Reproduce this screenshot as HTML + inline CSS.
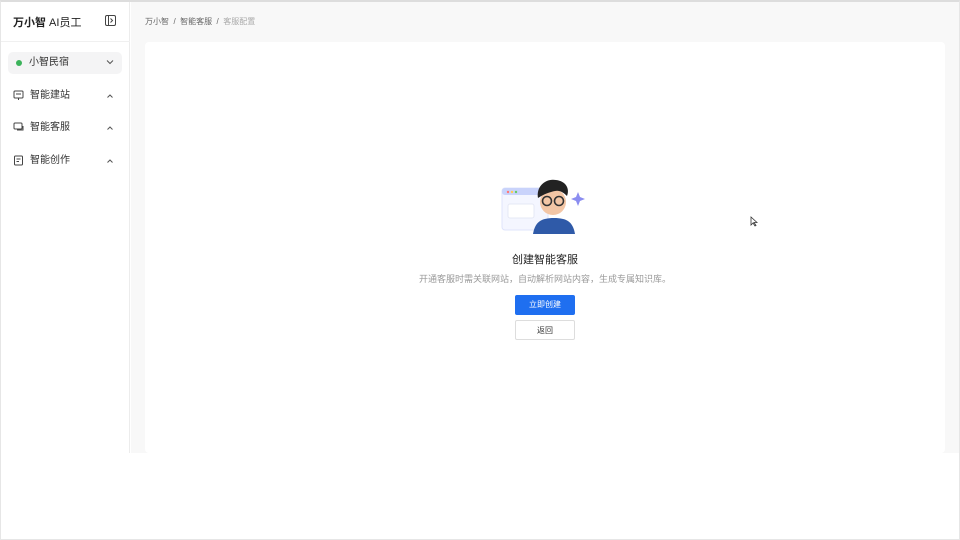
<!DOCTYPE html>
<html><head><meta charset="utf-8"><style>
*{margin:0;padding:0;box-sizing:border-box}
body{width:960px;height:540px;background:#fff;font-family:"Liberation Sans","Noto Sans CJK SC",sans-serif;position:relative;overflow:hidden;color:#333}
.frame{position:absolute;inset:0;border:1px solid #e6e6e6;border-top:2px solid #ddd;pointer-events:none}
.side{position:absolute;left:0;top:0;width:130px;height:453px;border-right:1px solid #ececec;background:#fff}
.logo{position:absolute;left:13px;top:14px;font-size:11px;color:#222}
.logo b{font-weight:700}
.hdrline{position:absolute;left:0;top:41px;width:130px;border-top:1px solid #f0f0f0}
.sel{position:absolute;left:8px;top:52px;width:114px;height:22px;background:#f4f4f5;border-radius:5px;font-size:10px;line-height:22px;padding-left:21px;color:#333}
.sel:before{content:"";position:absolute;left:8px;top:8px;width:6px;height:6px;border-radius:50%;background:#3cb35b}
.item{position:absolute;left:14px;font-size:10px;color:#333;padding-left:16px;height:14px;line-height:14px}
.chev{position:absolute;left:106px}
.main{position:absolute;left:131px;top:0;width:829px;height:453px;background:#f8f8f8}
.bc{position:absolute;left:145px;top:16px;font-size:8px;color:#666}
.bc span{color:#aaa}
.card{position:absolute;left:145px;top:42px;width:800px;height:411px;background:#fff;border-radius:4px}
.t{position:absolute;left:130px;width:830px;text-align:center}
.btn{position:absolute;left:515px;width:60px;height:20px;font-size:8px;text-align:center;line-height:20px;border-radius:2px}
</style></head><body>
<div class="side">
<div class="logo"><b>万小智</b> AI员工</div>
<svg style="position:absolute;left:105px;top:15px" width="11" height="11" viewBox="0 0 11 11"><rect x=".5" y=".5" width="10" height="10" rx="1.5" fill="none" stroke="#444"/><line x1="3.5" y1="1" x2="3.5" y2="10" stroke="#444"/><path d="M5.5 3.5l2 2-2 2" fill="none" stroke="#444"/></svg>
<div class="hdrline"></div>
<div class="sel">小智民宿</div>
<svg class="chev" style="top:59px" width="8" height="6"><path d="M1 1.5l3 3 3-3" fill="none" stroke="#555"/></svg>
<div class="item" style="top:89px">智能建站</div>
<svg style="position:absolute;left:13px;top:90px" width="11" height="11"><rect x="1" y="1" width="9" height="7" rx="1" fill="none" stroke="#444"/><line x1="5.5" y1="8" x2="5.5" y2="10" stroke="#444"/><line x1="3" y1="4" x2="8" y2="4" stroke="#444"/></svg>
<svg class="chev" style="top:93px" width="8" height="6"><path d="M1.5 4.5l2.5-2.5 2.5 2.5" fill="none" stroke="#555"/></svg>
<div class="item" style="top:121px">智能客服</div>
<svg style="position:absolute;left:13px;top:122px" width="12" height="11"><rect x="1" y="1" width="8" height="6" rx="1" fill="none" stroke="#444"/><path d="M4 8h6V4" fill="none" stroke="#444"/></svg>
<svg class="chev" style="top:125px" width="8" height="6"><path d="M1.5 4.5l2.5-2.5 2.5 2.5" fill="none" stroke="#555"/></svg>
<div class="item" style="top:154px">智能创作</div>
<svg style="position:absolute;left:13px;top:155px" width="11" height="11"><rect x="1.5" y="1" width="8" height="9" rx="1" fill="none" stroke="#444"/><line x1="3.5" y1="4" x2="7.5" y2="4" stroke="#444"/><line x1="3.5" y1="6.5" x2="6" y2="6.5" stroke="#444"/></svg>
<svg class="chev" style="top:158px" width="8" height="6"><path d="M1.5 4.5l2.5-2.5 2.5 2.5" fill="none" stroke="#555"/></svg>
</div>
<div class="main"></div>
<div class="bc">万小智 &nbsp;/&nbsp; 智能客服 &nbsp;/&nbsp; <span>客服配置</span></div>
<div class="card"></div>
<svg style="position:absolute;left:500px;top:172px" width="88" height="62">
<rect x="2" y="16" width="46" height="42" rx="3" fill="#f4f6ff" stroke="#dfe4fb"/>
<rect x="2" y="16" width="46" height="7" rx="3" fill="#c9d3fb"/>
<circle cx="8" cy="20" r="1.2" fill="#f77"/><circle cx="12" cy="20" r="1.2" fill="#fc5"/><circle cx="16" cy="20" r="1.2" fill="#6c6"/>
<rect x="8" y="32" width="26" height="14" rx="2" fill="#fff" stroke="#e5e8f5"/>
<path d="M33 62c2-12 8-16 21-16s19 4 21 16z" fill="#2f5aa8"/>
<circle cx="53" cy="30" r="13" fill="#f3c6a5"/>
<path d="M38 26c-2-12 8-20 18-18 10 1 14 9 11 16-4-4-8-6-12-5-5 1-11 3-17 7z" fill="#222"/>
<circle cx="47" cy="29" r="4.5" fill="none" stroke="#333" stroke-width="1.6"/><circle cx="59" cy="29" r="4.5" fill="none" stroke="#333" stroke-width="1.6"/>
<path d="M78 20l2 5 5 2-5 2-2 5-2-5-5-2 5-2z" fill="#8b8df0"/>
</svg>
<div class="t" style="top:251px;font-size:11px;color:#222">创建智能客服</div>
<div class="t" style="top:272px;font-size:9px;color:#999">开通客服时需关联网站，自动解析网站内容，生成专属知识库。</div>
<div class="btn" style="top:295px;background:#1f6ff0;color:#fff">立即创建</div>
<div class="btn" style="top:320px;border:1px solid #ddd;color:#333;background:#fff">返回</div>
<svg style="position:absolute;left:750px;top:216px" width="8" height="11"><path d="M1 1v8l2-2 2 3 1-.5-2-3h3z" fill="#fff" stroke="#333" stroke-width=".8"/></svg>
<div class="frame"></div>
</body></html>
